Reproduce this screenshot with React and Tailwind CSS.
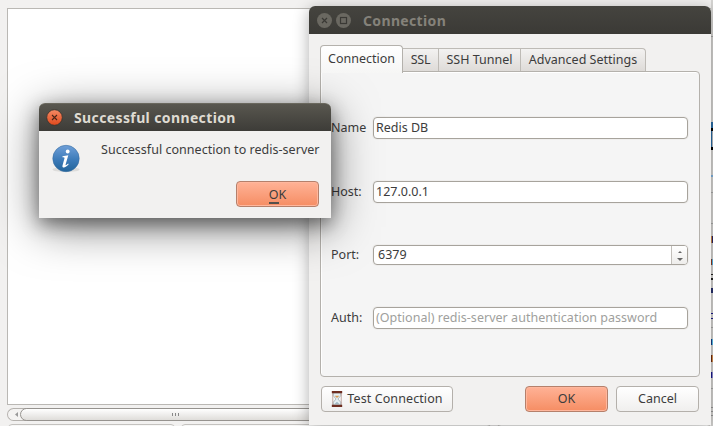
import React from "react";

const FONT = "font-['Noto_Sans','Open_Sans',sans-serif]";

// Slices of the window that peeks out at the right: [gap above, height, class]
const SLICES = [
  [36, 1, "bg-[#a9a8a6]"],
  [85, 6, "bg-[#2b6ea8]"],
  [0, 3, "bg-black"],
  [0, 16, "border-l border-[#2b6ea8] bg-[#b9bec3]"],
  [0, 3, "bg-black"],
  [25, 2, "bg-[#7fb2e0]"],
  [15, 1, "bg-[#aaa]"],
  [30, 1, "bg-[#aaa]"],
  [12, 7, "border-l border-[#c98a4a] bg-[#2a2364]"],
  [16, 6, "border-l border-[#8d3c22] bg-[#58b8e8]"],
  [9, 1, "bg-[#222]"],
  [3, 2, "bg-[#222]"],
  [8, 5, "bg-[#27306b]"],
  [20, 1, "bg-[#1a1a8c]"],
  [4, 1, "bg-[#1a1a8c]"],
  [8, 1, "bg-[#aaa]"],
  [11, 6, "border-l border-[#183a80] bg-[#5ec3ee]"],
  [10, 7, "border-l border-[#6b2a12] bg-[#d8924e]"],
  [10, 6, "border-l border-[#1a1a8c] bg-[#8f8fd0]"],
  [10, 1, "bg-[#aaa]"],
  [18, 1, "bg-[#999]"],
  [3, 1, "bg-[#999]"],
  [3, 1, "bg-[#999]"],
];

function Backdrop() {
  return (
    <div className="flex h-full w-full">
      <div className="flex h-full w-[711px] shrink-0 flex-col pl-[7px] pt-2">
        <div className="h-[397px] shrink-0 border border-r-0 border-[#bab8b4] bg-white" />
        <div className="mt-[3px] flex h-[13px] shrink-0 rounded-l-full border border-r-0 border-[#b5b2ae] bg-[#f4f3f2]">
          <div className="flex w-3 items-center justify-center pl-1">
            <svg width="3" height="5" viewBox="0 0 3 5"><path d="M3 0v5L0 2.5z" fill="#999" /></svg>
          </div>
          <div className="-my-px flex flex-1 items-center gap-[2px] rounded-l-full border border-[#96938f] bg-linear-to-b from-white to-[#dfddda] pl-[151px]">
            <i className="h-[3px] w-px bg-[#888]" />
            <i className="h-[3px] w-px bg-[#888]" />
            <i className="h-[3px] w-px bg-[#888]" />
          </div>
        </div>
        <div className="mt-[3px] flex h-[2px] shrink-0 gap-1.5 overflow-hidden pl-px">
          <div className="h-3 w-[167px] rounded border border-[#c4c2bf] bg-[#f8f8f7]" />
          <div className="h-3 w-[310px] rounded border border-[#c4c2bf] bg-[#f8f8f7]" />
          <div className="h-3 flex-1 rounded border border-[#c4c2bf] bg-[#f8f8f7]" />
        </div>
      </div>
      <div className="flex h-full w-[2px] flex-col overflow-hidden bg-[#d6d5d3]">
        {SLICES.map(([gap, height, tone], i) => (
          <div key={i} className={`shrink-0 ${tone}`} style={{ marginTop: gap, height }} />
        ))}
      </div>
    </div>
  );
}

function Tab({ className, text, children }) {
  return (
    <div className={`flex h-[23px] items-center justify-center whitespace-nowrap border border-[#bebbb6] bg-linear-to-b from-[#f3f2f1] to-[#dedbd8] pt-px ${className}`}>
      <span className={text}>{children}</span>
    </div>
  );
}

function Field({ label, className, children }) {
  return (
    <div className={`flex items-center ${className}`}>
      <span className="w-[42px] shrink-0 whitespace-nowrap pt-px">{label}</span>
      {children}
    </div>
  );
}

const INPUT = "flex h-full w-[315px] items-center whitespace-nowrap rounded-[4px] border border-[#a7a39c] bg-white pl-[2px] shadow-[0_0_0_1px_#efeeed]";
const BUTTON = "flex h-[26px] items-center justify-center whitespace-nowrap rounded-[4px] border";
const PLAIN = "border-[#b4b0ab] bg-linear-to-b from-white to-[#f0efee]";
const ORANGE = "border-[#b5806b] bg-linear-to-b from-[#ffb296] to-[#f58d63] shadow-[inset_0_0_0_1px_#ffb79d]";

function Hourglass() {
  return (
    <svg width="12" height="16" viewBox="0 0 12 17">
      <path d="M2 2h8v3L7 8.5l3 3.500V15H2v-3l3-3.500L2 5z" fill="#e6eff2" stroke="#8b9da3" strokeWidth=".7" />
      <path d="M3.500 5h5L6 7.500z" fill="#d79a55" />
      <path d="M3 14l3-2.500L9 14z" fill="#9fb9c3" />
      <path d="M1.500 2v13M10.500 2v13" stroke="#b09088" strokeWidth=".8" />
      <path d="M.5 0h11v2.300H.5zM.5 14.700h11V17H.5z" fill="#6d2d20" />
    </svg>
  );
}

function ConnectionWindow() {
  return (
    <div className="absolute left-[309px] top-[6px] h-[419px] w-[402px] rounded-t-[6px] bg-[#f2f1f0] shadow-[0_3px_16px_rgba(0,0,0,0.32)]">
      <div className="flex h-7 items-center rounded-t-[6px] bg-linear-to-b from-[#45443f] to-[#3b3a36] pl-[8px]">
        <svg width="34" height="16" viewBox="0 0 34 16">
          <circle cx="7.500" cy="8.500" r="7.500" fill="#6a6861" />
          <circle cx="26.500" cy="8.500" r="7.500" fill="#6a6861" />
          <path d="M5 6l5 5M10 6l-5 5" stroke="#3a3935" strokeWidth="1.200" />
          <rect x="23.500" y="5.500" width="6" height="6" fill="none" stroke="#3a3935" strokeWidth="1.200" />
        </svg>
        <span className="ml-[12px] whitespace-nowrap pt-px text-[14px] font-bold leading-5 tracking-[0.35px] text-[#85827a]">Connection</span>
      </div>
      <div className="px-[11px] pt-[11px]">
        <div className="flex h-[26px] items-end">
          <div className="z-10 -mb-[2px] flex h-[28px] w-[83px] items-center justify-center rounded-t-[4px] border border-b-0 border-[#b4b1ac] bg-linear-to-b from-white to-[#f6f6f5]">
            <span>Connection</span>
          </div>
          <Tab className="w-[36px] border-b-0 border-l-0" text="tracking-[-0.2px]">SSL</Tab>
          <Tab className="w-[82px] border-b-0 border-l-0">SSH Tunnel</Tab>
          <Tab className="w-[125px] rounded-tr-[4px] border-b-0 border-l-0">Advanced Settings</Tab>
        </div>
        <div className="h-[306px] w-[380px] rounded-b-[4px] rounded-tr-[4px] border border-[#b4b1ac] bg-[#f5f5f5] pl-[10px] pt-[45px] shadow-[inset_1px_1px_0_#fff]">
          <Field label="Name" className="h-[22px]">
            <div className={INPUT}>Redis DB</div>
          </Field>
          <Field label="Host:" className="mt-[42px] h-[22px]">
            <div className={INPUT}>127.0.0.1</div>
          </Field>
          <Field label="Port:" className="mt-[42px] h-[20px]">
            <div className={`${INPUT} justify-between overflow-hidden`}>
              <span className="pl-[2px] pt-px">6379</span>
              <div className="flex h-full w-[16px] flex-col items-center justify-around border-l border-[#c2bfba] bg-linear-to-b from-white to-[#eeedeb] pb-px pt-[2px]">
                <svg width="4" height="2" viewBox="0 0 4 2"><path d="M0 2h4L2 0z" fill="#666" /></svg>
                <svg width="6" height="3" viewBox="0 0 6 3"><path d="M0 0h6L3 3z" fill="#666" /></svg>
              </div>
            </div>
          </Field>
          <Field label="Auth:" className="mt-[42px] h-[22px]">
            <div className={`${INPUT} tracking-[0.03px] text-[#a09f9d]`}>(Optional) redis-server authentication password</div>
          </Field>
        </div>
        <div className="mt-[9px] flex pl-px">
          <div className={`${BUTTON} ${PLAIN} w-[132px] gap-[4px]`}>
            <Hourglass />
            <span className="pt-px tracking-[0.1px]">Test Connection</span>
          </div>
          <div className={`${BUTTON} ${ORANGE} ml-[72px] w-[83px] pt-px`}>OK</div>
          <div className={`${BUTTON} ${PLAIN} ml-[8px] w-[83px] pt-px`}>Cancel</div>
        </div>
      </div>
    </div>
  );
}

function MessageWindow() {
  return (
    <div className="absolute left-[39px] top-[103px] flex h-[115px] w-[292px] flex-col rounded-t-[6px] bg-[#f2f1f0] shadow-[0_9px_46px_rgba(0,0,0,0.52),0_6px_18px_rgba(0,0,0,0.42)]">
      <div className="flex h-7 shrink-0 items-center rounded-t-[6px] border-t border-[#6a685e] bg-linear-to-b from-[#59574f] to-[#3d3c38] pl-[7px]">
        <svg width="17" height="17" viewBox="0 0 17 17">
          <defs>
            <linearGradient id="close" x1="0" y1="0" x2="0" y2="1">
              <stop offset="0" stopColor="#f58a64" />
              <stop offset="1" stopColor="#e0491c" />
            </linearGradient>
          </defs>
          <circle cx="8.500" cy="8.500" r="7.800" fill="url(#close)" stroke="#35322d" strokeWidth=".8" />
          <path d="M6 6l5 5M11 6l-5 5" stroke="#4a2618" strokeWidth="1.100" />
        </svg>
        <span className="ml-[11px] whitespace-nowrap text-[14px] font-bold leading-5 tracking-[0.38px] text-[#dfdbd2]">Successful connection</span>
      </div>
      <div className="flex pl-[12px] pt-[9px]">
        <svg className="mt-[3px]" width="30" height="31" viewBox="0 0 30 31">
          <defs>
            <linearGradient id="info" x1="0" y1="0" x2="0" y2="1">
              <stop offset="0" stopColor="#6f9fd8" />
              <stop offset=".55" stopColor="#3d7bb9" />
              <stop offset="1" stopColor="#22649a" />
            </linearGradient>
          </defs>
          <ellipse cx="15" cy="26.500" rx="13.500" ry="2.500" fill="#dddcda" />
          <circle cx="15" cy="15.500" r="13.200" fill="url(#info)" stroke="#3a6fa3" strokeWidth=".6" />
          <circle cx="16.700" cy="8.500" r="1.900" fill="#fff" />
          <path d="M11.500 13.300l5.800-1-2.700 9.200c-.3 1.200.6.900 2.500-.9l.6.600c-2.500 3.400-7 4.600-6.200 1.200l2-7.200c.2-.8-.6-1-2.100-1z" fill="#fff" />
        </svg>
        <span className="ml-[20px] mt-px whitespace-nowrap leading-[18px] tracking-[0.03px]">Successful connection to redis-server</span>
      </div>
      <div className={`${BUTTON} ${ORANGE} ml-[197px] mt-auto mb-[11px] w-[83px] pt-[2px]`}>
        <span className="border-b-2 border-[#55504b] leading-[15px]">O</span>K
      </div>
    </div>
  );
}

export default function App() {
  return (
    <div className={`relative h-[426px] w-[713px] overflow-hidden bg-[#f2f1f0] text-[12.500px] text-[#3c3c3c] ${FONT}`}>
      <Backdrop />
      <ConnectionWindow />
      <MessageWindow />
    </div>
  );
}
